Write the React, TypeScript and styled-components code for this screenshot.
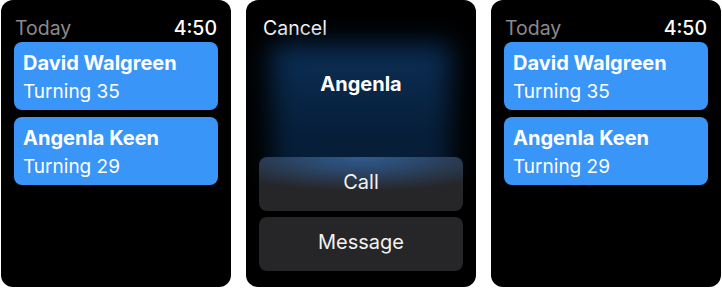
import React from 'react';
import styled, { createGlobalStyle } from 'styled-components';

type Birthday = {
  name: string;
  age: number;
};

const birthdays: Birthday[] = [
  { name: 'David Walgreen', age: 35 },
  { name: 'Angenla Keen', age: 29 },
];

const GlobalStyle = createGlobalStyle`
  html, body {
    margin: 0;
    padding: 0;
    background: #ffffff;
  }
  body {
    font-family: Inter, "Noto Sans", "Liberation Sans", sans-serif;
    -webkit-font-smoothing: antialiased;
  }
`;

const Screens = styled.div`
  display: flex;
  gap: 15px;
  padding-left: 1px;
`;

const Watch = styled.div`
  width: 230px;
  height: 287px;
  background: #000;
  border-radius: 12px;
  box-sizing: border-box;
  padding: 17px 13px 0;
  display: flex;
  flex-direction: column;
  overflow: hidden;
`;

const Header = styled.div<{ $inset?: number }>`
  display: flex;
  justify-content: space-between;
  align-items: baseline;
  height: 22px;
  line-height: 22px;
  font-size: 19.5px;
  margin-bottom: 3px;
  padding: 0 1px 0 ${(p) => p.$inset ?? 1}px;
`;

const Title = styled.span<{ $muted?: boolean }>`
  color: ${(p) => (p.$muted ? '#8a8a8e' : '#ffffff')};
  font-weight: 400;
`;

const Clock = styled.span`
  color: #fff;
  font-weight: 500;
`;

const List = styled.div`
  display: flex;
  flex-direction: column;
  gap: 7px;
`;

const Card = styled.div`
  background: #3a95f9;
  border-radius: 8px;
  padding: 9px 9px 6px;
  display: flex;
  flex-direction: column;
  gap: 5px;
  height: 68px;
  box-sizing: border-box;
`;

const Name = styled.div`
  color: #fff;
  font-size: 20px;
  line-height: 24px;
  font-weight: 700;
`;

const Sub = styled.div`
  color: #fff;
  font-size: 19px;
  line-height: 24px;
  font-weight: 400;
`;

const Glow = styled.div`
  position: relative;
  height: 115px;
  display: flex;
  justify-content: center;
  padding-top: 30px;
  box-sizing: border-box;

  &::before {
    content: '';
    position: absolute;
    left: 12px;
    right: 12px;
    top: 2px;
    bottom: -18px;
    background: linear-gradient(#0b2f58 0%, #082443 45%, #061b35 80%, #0a2746 100%);
    filter: blur(13px);
  }
`;

const GlowName = styled.div`
  position: relative;
  color: #fff;
  font-size: 20px;
  line-height: 24px;
  font-weight: 700;
`;

const Actions = styled.div`
  display: flex;
  flex-direction: column;
  gap: 6px;
`;

const Action = styled.div<{ $tinted?: boolean }>`
  position: relative;
  height: 54px;
  border-radius: 8px;
  display: flex;
  align-items: center;
  justify-content: center;
  padding-bottom: 4px;
  box-sizing: border-box;
  color: #f2f2f2;
  font-size: 20px;
  font-weight: 400;
  background: ${(p) =>
    p.$tinted
      ? 'radial-gradient(ellipse 85% 70% at 50% 0%, #2f5a8e 0%, rgba(44, 78, 120, 0.85) 35%, rgba(38, 38, 40, 0) 90%), #262628'
      : '#262628'};
`;

const BirthdayList: React.FC = () => (
  <Watch>
    <Header>
      <Title $muted>Today</Title>
      <Clock>4:50</Clock>
    </Header>
    <List>
      {birthdays.map((b) => (
        <Card key={b.name}>
          <Name>{b.name}</Name>
          <Sub>Turning {b.age}</Sub>
        </Card>
      ))}
    </List>
  </Watch>
);

const ContactActions: React.FC = () => (
  <Watch>
    <Header $inset={4}>
      <Title>Cancel</Title>
    </Header>
    <Glow>
      <GlowName>Angenla</GlowName>
    </Glow>
    <Actions>
      <Action $tinted>Call</Action>
      <Action>Message</Action>
    </Actions>
  </Watch>
);

const App: React.FC = () => {
  return (
    <>
      <GlobalStyle />
      <Screens>
        <BirthdayList />
        <ContactActions />
        <BirthdayList />
      </Screens>
    </>
  );
};

export default App;
